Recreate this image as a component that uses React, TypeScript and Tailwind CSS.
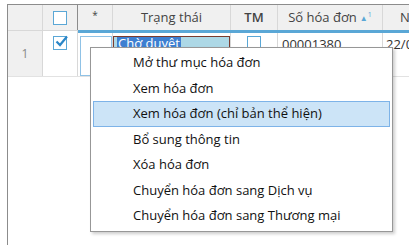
import React from "react";

const items = [
  "Mở thư mục hóa đơn",
  "Xem hóa đơn",
  "Xem hóa đơn (chỉ bản thể hiện)",
  "Bổ sung thông tin",
  "Xóa hóa đơn",
  "Chuyển hóa đơn sang Dịch vụ",
  "Chuyển hóa đơn sang Thương mại",
];

function Box({ checked }: { checked?: boolean }) {
  return (
    <div className="relative w-[14px] h-[14px] border border-[#5aa7d6] bg-white">
      {checked && (
        <svg className="absolute -top-[3px] left-[0px]" width="15" height="15" viewBox="0 0 15 15">
          <path d="M2.5 7.5 L6 11 L13 2.5" fill="none" stroke="#2b86c7" strokeWidth="2.2" />
        </svg>
      )}
    </div>
  );
}

export default function App() {
  return (
    <div
      className="relative w-[409px] h-[245px] bg-white overflow-hidden pt-[4px] pl-[7px]"
      style={{ fontFamily: '"Open Sans", "Noto Sans", sans-serif' }}
    >
      <div className="h-full w-[460px] border-l border-t border-[#8c8c8c]">
        {/* header */}
        <div className="flex h-[25px] bg-[#f0f0f0] text-[13px] text-[#444] whitespace-nowrap">
          <div className="w-[35px] shrink-0 border-r border-[#d8d8d8]" />
          <div className="w-[35px] shrink-0 border-r border-[#8c8c8c] flex items-center justify-center">
            <Box />
          </div>
          <div className="w-[35px] shrink-0 border-r border-[#d8d8d8] flex items-center justify-center text-[10px] pb-[4px]">*</div>
          <div className="w-[118px] shrink-0 border-r border-[#d8d8d8] flex items-center justify-center">Trạng thái</div>
          <div className="w-[47px] shrink-0 border-r border-[#d8d8d8] flex items-center justify-center font-semibold">TM</div>
          <div className="w-[105px] shrink-0 border-r border-[#d8d8d8] flex items-center justify-center gap-[3px]">
            <span>Số hóa đơn</span>
            <span className="text-[8px] text-[#5aa7d6] leading-none">▲<sup className="text-[7px]">1</sup></span>
          </div>
          <div className="flex-1 pl-[17px] flex items-center">Ngày hóa đơn</div>
        </div>
        {/* row */}
        <div className="flex h-[47px] border-b border-[#e2e2e2] text-[13px] whitespace-nowrap">
          <div className="w-[35px] shrink-0 bg-[#f0f0f0] border-r border-t border-[#d8d8d8] flex items-center justify-center text-[#888] text-[12px]">1</div>
          <div className="w-[35px] shrink-0 border-r border-t border-[#d8d8d8] flex justify-center pt-[5px]">
            <Box checked />
          </div>
          <div className="flex-1 flex flex-col">
            <div className="h-[3px] bg-[#5aa7d6]" />
            <div className="flex flex-1">
              <div className="w-[35px] shrink-0 border-r border-[#d8d8d8] pl-[2px] pt-[3px]">
                <div className="w-[32px] h-[40px] border border-[#8fc2e6] bg-white" />
              </div>
              <div className="w-[118px] shrink-0 border-r border-[#d8d8d8] pt-[3px]">
                <div className="h-[14px] bg-[#add8e6] border border-[#7a3b2e] flex items-center pl-[3px] overflow-hidden">
                  <span className="bg-[#3d7fd1] text-white leading-[12px] px-[1px]">Chờ duyệt</span>
                </div>
              </div>
              <div className="w-[47px] shrink-0 border-r border-[#d8d8d8] flex justify-center pt-[3px]">
                <Box />
              </div>
              <div className="w-[105px] shrink-0 border-r border-[#d8d8d8] pl-[4px] pt-[2px] text-[#333]">00001380</div>
              <div className="flex-1 pl-[3px] pt-[2px] text-[#333]">22/03/2018</div>
            </div>
          </div>
        </div>
      </div>

      {/* context menu */}
      <div className="absolute left-[90px] top-[47px] w-[303px] h-[185px] bg-white border border-[#979797] shadow-[2px_2px_3px_rgba(0,0,0,0.2)] py-[2px] px-[2px] text-[13px] text-[#111]">
        {items.map((t, i) => (
          <div
            key={t}
            className={
              "h-[25.5px] flex items-center pl-[39px] " +
              (i === 2 ? "bg-[#cce4f7] border border-[#7db3e8] pl-[38px]" : "border border-transparent")
            }
          >
            {t}
          </div>
        ))}
      </div>
    </div>
  );
}
